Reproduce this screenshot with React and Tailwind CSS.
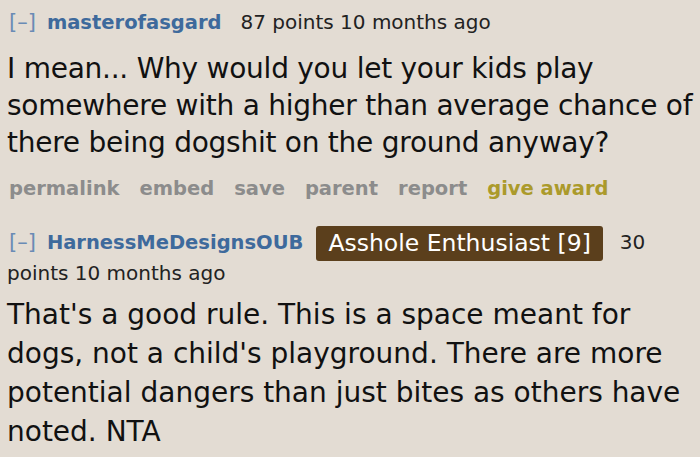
import React from 'react';

const font = { fontFamily: '"DejaVu Sans", Verdana, sans-serif' };

const Toggle = () => (
  <span className="text-[21px] text-[#6a8bb5] ml-[2px] mr-[11px]">[–]</span>
);

const actions = ['permalink', 'embed', 'save', 'parent', 'report'];

const App = () => {
  return (
    <div className="w-[700px] h-[457px] overflow-hidden bg-[#e3dcd3] pl-[7px] pt-[7px]" style={font}>
      {/* first comment */}
      <div className="text-[20px] leading-[30px] text-[#222]">
        <Toggle />
        <span className="text-[19.5px] font-bold text-[#3e6a9c] mr-[19px]">masterofasgard</span>
        <span>87 points 10 months ago</span>
      </div>
      <p className="text-[28px] leading-[37px] tracking-[-0.25px] text-[#111] mt-[12px]">
        I mean... Why would you let your kids play somewhere with a higher than average chance of there being dogshit on the ground anyway?
      </p>
      <div className="flex gap-[20px] text-[19.5px] font-bold mt-[14px] leading-[28px] pl-[2px]">
        {actions.map((a) => (
          <span key={a} className="text-[#8c8c8c]">{a}</span>
        ))}
        <span className="text-[#ab9a2b]">give award</span>
      </div>

      {/* reply */}
      <div className="mt-[24px]">
        <div className="text-[20px] leading-[30px] text-[#222]">
          <Toggle />
          <span className="text-[19.5px] font-bold text-[#3e6a9c] mr-[13px]">HarnessMeDesignsOUB</span>
          <span className="inline-block bg-[#5b3f1c] text-white text-[23.5px] leading-[35px] -my-[3px] px-[12px] rounded-[3px] mr-[17px] align-middle">
            Asshole Enthusiast [9]
          </span>
          <span>30 points 10 months ago</span>
        </div>
        <p className="text-[28px] leading-[39px] text-[#111] mt-[7px]">
          That's a good rule. This is a space meant for dogs, not a child's playground. There are more potential dangers than just bites as others have noted. NTA
        </p>
      </div>
    </div>
  );
};

export default App;
